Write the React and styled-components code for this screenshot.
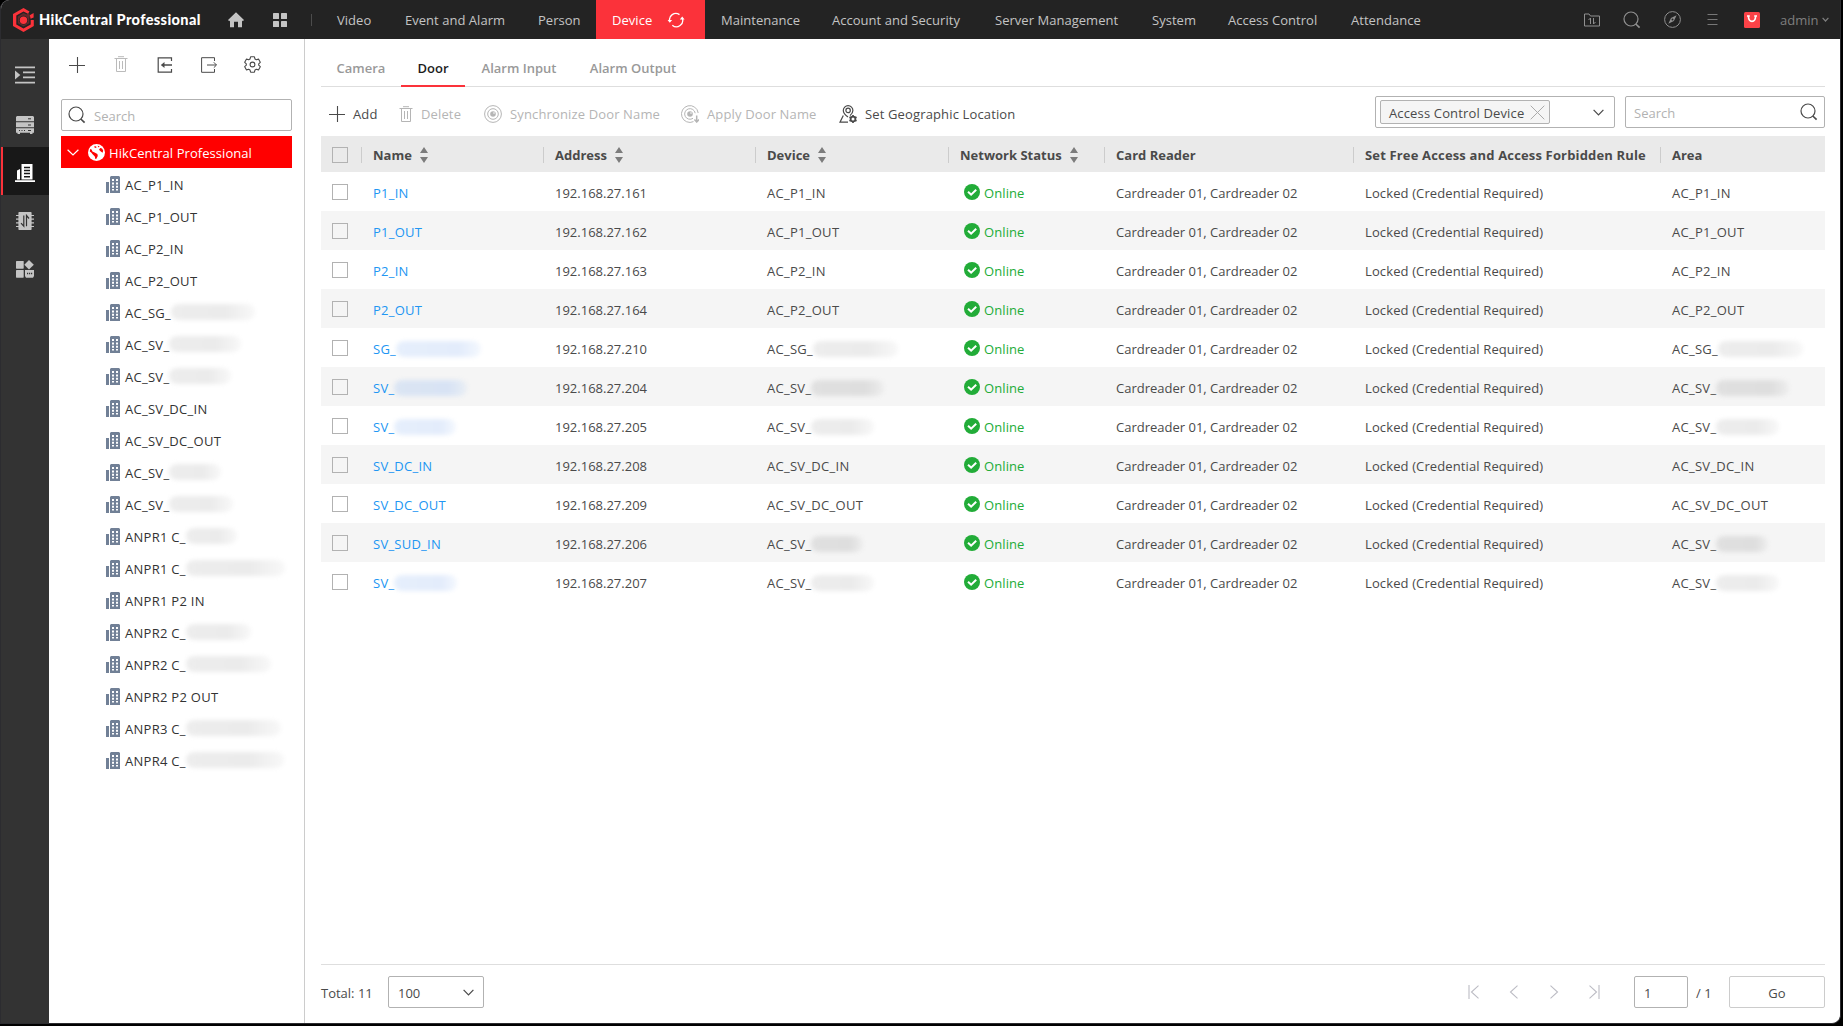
import React, { useState } from 'react';
import styled, { createGlobalStyle } from 'styled-components';

const RED = '#fb323a';

const navItems = [
  { label: 'Video', width: 68 },
  { label: 'Event and Alarm', width: 133 },
  { label: 'Person', width: 74 },
  { label: 'Device', width: 109, active: true },
  { label: 'Maintenance', width: 111 },
  { label: 'Account and Security', width: 163 },
  { label: 'Server Management', width: 157 },
  { label: 'System', width: 76 },
  { label: 'Access Control', width: 123 },
  { label: 'Attendance', width: 103 },
];

const tabs = [
  { label: 'Camera', width: 80 },
  { label: 'Door', width: 64 },
  { label: 'Alarm Input', width: 108 },
  { label: 'Alarm Output', width: 120 },
];

// hidden = width of the masked part that follows the visible prefix
const areas = [
  { name: 'AC_P1_IN' },
  { name: 'AC_P1_OUT' },
  { name: 'AC_P2_IN' },
  { name: 'AC_P2_OUT' },
  { name: 'AC_SG_', hidden: 84 },
  { name: 'AC_SV_', hidden: 72 },
  { name: 'AC_SV_', hidden: 62 },
  { name: 'AC_SV_DC_IN' },
  { name: 'AC_SV_DC_OUT' },
  { name: 'AC_SV_', hidden: 52 },
  { name: 'AC_SV_', hidden: 64 },
  { name: 'ANPR1 C_', hidden: 51 },
  { name: 'ANPR1 C_', hidden: 99 },
  { name: 'ANPR1 P2 IN' },
  { name: 'ANPR2 C_', hidden: 65 },
  { name: 'ANPR2 C_', hidden: 85 },
  { name: 'ANPR2 P2 OUT' },
  { name: 'ANPR3 C_', hidden: 95 },
  { name: 'ANPR4 C_', hidden: 98 },
];

const doors = [
  { name: 'P1_IN', ip: '192.168.27.161', area: 'AC_P1_IN' },
  { name: 'P1_OUT', ip: '192.168.27.162', area: 'AC_P1_OUT' },
  { name: 'P2_IN', ip: '192.168.27.163', area: 'AC_P2_IN' },
  { name: 'P2_OUT', ip: '192.168.27.164', area: 'AC_P2_OUT' },
  { name: 'SG_', ip: '192.168.27.210', area: 'AC_SG_', nameHidden: 85, hidden: 85 },
  { name: 'SV_', ip: '192.168.27.204', area: 'AC_SV_', nameHidden: 73, hidden: 73 },
  { name: 'SV_', ip: '192.168.27.205', area: 'AC_SV_', nameHidden: 62, hidden: 63 },
  { name: 'SV_DC_IN', ip: '192.168.27.208', area: 'AC_SV_DC_IN' },
  { name: 'SV_DC_OUT', ip: '192.168.27.209', area: 'AC_SV_DC_OUT' },
  { name: 'SV_SUD_IN', ip: '192.168.27.206', area: 'AC_SV_', hidden: 52 },
  { name: 'SV_', ip: '192.168.27.207', area: 'AC_SV_', nameHidden: 63, hidden: 63 },
];

const columns = [
  { label: 'Name', sortable: true },
  { label: 'Address', sortable: true },
  { label: 'Device', sortable: true },
  { label: 'Network Status', sortable: true },
  { label: 'Card Reader' },
  { label: 'Set Free Access and Access Forbidden Rule', spacing: 0.16 },
  { label: 'Area' },
];

const Svg = ({ w, h, children, ...rest }) => (
  <svg width={w} height={h} viewBox={`0 0 ${w} ${h}`} fill="none" stroke="currentColor" {...rest}>
    {children}
  </svg>
);

const LogoIcon = () => (
  <Svg w={22} h={24} stroke="none" fill={RED}>
    <path d="M10.5 0 L16.5 3.4 L15 5.8 L10.5 3.4 L3.3 7.5 V16.5 L10.5 20.6 L17.7 16.5 V12 H20.8 V18 L10.5 24 L0 18 V6 Z" />
    <path d="M16.8 7.2 L20.6 5 V9.6 L17.6 10.8 Z" />
    <path d="M10.5 5 L13.5 6.6 L16 5 L17 8 L16.3 10 V15.3 L10.5 18.6 L4.8 15.3 V8.6 Z M10.5 7.8 A4.4 4.4 0 1 0 10.5 16.6 A4.4 4.4 0 1 0 10.5 7.8 Z" fillRule="evenodd" opacity="0.3" />
    <circle cx="10.5" cy="12.2" r="3.7" />
  </Svg>
);

const HomeIcon = () => (
  <Svg w={16} h={16} stroke="none" fill="currentColor">
    <path d="M8 0.3 L16 8 L14.8 9.2 L14 8.5 V15.2 H10 V9.8 H6 V15.2 H2 V8.5 L1.2 9.2 L0 8 Z" />
  </Svg>
);

const GridIcon = () => (
  <Svg w={14} h={14} stroke="none" fill="currentColor">
    <rect width="6" height="6" rx="0.6" />
    <rect x="8" width="6" height="6" rx="0.6" />
    <rect y="8" width="6" height="6" rx="0.6" />
    <rect x="8" y="8" width="6" height="6" rx="0.6" />
  </Svg>
);

const RefreshIcon = () => (
  <Svg w={18} h={16} strokeWidth="1.3">
    <path d="M2.8 9.5 A6.3 6.3 0 0 1 12.5 2.6" />
    <path d="M15.2 6 A6.3 6.3 0 0 1 5.3 13.2" />
    <path d="M0.6 8 L2.8 10.8 L5.2 8 Z" fill="currentColor" stroke="none" />
    <path d="M12.8 7.4 L15.2 4.4 L17.6 7.4 Z" fill="currentColor" stroke="none" />
  </Svg>
);

const SearchIcon = () => (
  <Svg w={18} h={18} strokeWidth="1.2">
    <circle cx="8" cy="8" r="7" />
    <path d="M12.8 13 L16.6 16.6" strokeWidth="1.7" />
  </Svg>
);

const FolderIcon = () => (
  <Svg w={16} h={14}>
    <path d="M0.5 13 V1 H5 L6.5 3 H15.5 V13 Z" />
    <path d="M6.5 11 V5 L4.5 7 M9.5 5 V11 L11.5 9" />
  </Svg>
);

const CompassIcon = () => (
  <Svg w={17} h={17}>
    <circle cx="8.5" cy="8.5" r="7.9" />
    <path d="M12.6 4.2 L9.9 9.9 L7 7.1 Z M4.3 12.8 L7 7.1 L9.9 9.9 Z" fill="currentColor" stroke="none" />
    <circle cx="8.5" cy="8.5" r="1" fill="#232323" stroke="none" />
  </Svg>
);

const MenuIcon = () => (
  <Svg w={11} h={11}>
    <path d="M0.5 0.5 H10.5 M0.5 5.5 H10.5 M0.5 10.5 H10.5" strokeWidth="1.2" />
  </Svg>
);

const BagIcon = () => (
  <Svg w={16} h={16}>
    <rect width="16" height="16" rx="1.5" fill="#fb4247" stroke="none" />
    <path d="M4.4 4.3 C4.6 11 11.4 11 11.6 4.3" stroke="#fff" strokeWidth="1.6" />
    <path d="M3 4 H5.8 M10.2 4 H13" stroke="#fff" strokeWidth="1.6" />
  </Svg>
);

const Chevron = ({ w = 11, h = 7 }) => (
  <Svg w={w} h={h} strokeWidth="1.2">
    <path d={`M0.6 0.8 L${w / 2} ${h - 1} L${w - 0.6} 0.8`} />
  </Svg>
);

const IndentIcon = () => (
  <Svg w={20} h={18} strokeWidth="1.7">
    <path d="M0 1.3 H20 M8 6.3 H20 M8 11.3 H20 M0 16.7 H20" />
    <path d="M0 4.5 L5.3 9 L0 13.5 Z" fill="currentColor" stroke="none" />
  </Svg>
);

const ServerIcon = () => (
  <Svg w={18} h={18} stroke="none" fill="currentColor">
    <path d="M1 0 H17 L18 1 V5.3 H0 V1 Z M0 6.3 H18 V11.3 H0 Z M0 12.3 H18 V16.8 H16.5 V18 H14 V16.8 H4 V18 H1.5 V16.8 H0 Z" />
    <path d="M12 2.8 H15 M12 9 H15 M12 14.5 H15 M3 14.5 H4 M5.5 14.5 H6.5 M8 14.5 H9" stroke="#333" />
  </Svg>
);

const BuildingIcon = () => (
  <Svg w={20} h={18} stroke="none" fill="currentColor">
    <path d="M2 6.5 L5 5 V15.6 H2 Z M6.5 0 H17.5 V15.6 H6.5 Z M0 16.2 H20 V18 H0 Z" />
    <path d="M9 3.5 H15 M9 6.5 H15 M9 9.5 H15 M9 12.7 H15" stroke="#181818" strokeWidth="1.5" />
  </Svg>
);

const ChipIcon = () => (
  <Svg w={18} h={18}>
    <path d="M0 3.5 H18 M0 7.2 H18 M0 10.9 H18 M0 14.5 H18" strokeWidth="1.2" />
    <rect x="2.4" width="13.2" height="18" rx="0.8" fill="currentColor" stroke="none" />
    <path d="M7.8 3.5 V14.2 L5 11.2 M10.5 14.2 V3.5 L13 6.5" stroke="#333" strokeWidth="1.2" />
  </Svg>
);

const WidgetsIcon = () => (
  <Svg w={18} h={18} stroke="none" fill="currentColor">
    <rect y="1" width="7.7" height="7.7" rx="0.6" />
    <rect y="10" width="7.7" height="7.7" rx="0.6" />
    <path d="M13 0 L17.8 4.7 L13 9.4 L8.3 4.7 Z" />
    <path d="M9 10 H18 V16 L17 17.7 H10 L9 16 Z" />
    <path d="M11 13.5 H12.2 M13 13.5 H14.2 M15 13.5 H16.2" stroke="#333" strokeWidth="1.6" />
  </Svg>
);

const PlusIcon = () => (
  <Svg w={16} h={16}>
    <path d="M0 8.5 H16 M8.5 0 V16" strokeWidth="1.1" />
  </Svg>
);

const TrashIcon = () => (
  <Svg w={14} h={17}>
    <path d="M4 0.7 H10 M0.5 2.5 H13.5 M2.5 3 V15.5 H11.5 V3 M5.5 5 V13 M8.5 5 V13" />
  </Svg>
);

const ImportIcon = () => (
  <Svg w={16} h={16} strokeWidth="1.2">
    <path d="M14.5 4 V0.8 H1.2 V15.2 H14.5 V12" />
    <path d="M5 8 H15" strokeWidth="1.4" />
    <path d="M3.8 8 L7.5 5 V11 Z" fill="currentColor" stroke="none" />
  </Svg>
);

const ExportIcon = () => (
  <Svg w={16} h={16}>
    <path d="M13.5 4 V0.7 H0.6 V15.3 H13.5 V12" />
    <path d="M6 8 H15.3 M12.8 5.3 L15.5 8 L12.8 10.7" />
  </Svg>
);

const GearIcon = () => (
  <Svg w={17} h={17} strokeWidth="1.1" strokeLinejoin="round">
    <path d="M6.6 0.8 H10.4 L11 3 L12.3 3.7 L14.5 3.1 L16.3 6.3 L14.7 7.8 V9.2 L16.3 10.7 L14.5 13.9 L12.3 13.3 L11 14 L10.4 16.2 H6.6 L6 14 L4.7 13.3 L2.5 13.9 L0.7 10.7 L2.3 9.2 V7.8 L0.7 6.3 L2.5 3.1 L4.7 3.7 L6 3 Z" />
    <circle cx="8.5" cy="8.5" r="2.4" />
  </Svg>
);

const GlobeIcon = () => (
  <Svg w={17} h={17} stroke="none">
    <circle cx="8.5" cy="8.5" r="8.5" fill="#fff" />
    <path d="M2.2 5 L3.6 5.6 L4.4 7.6 L6.6 8.4 L9.4 10 L9.8 12 L8.2 15 L7.4 15 L6.8 12.4 L4.6 10.2 L3.2 8.6 L1.8 7.6 Z M6 2.6 L8 2.2 L8.6 3.4 L7 4 Z M9.6 1.8 L11.6 2.2 L10.6 3.6 Z M12.2 4 L14 4.4 L15.2 6.6 L14.6 8.8 L12.8 7.6 L11 5.8 Z" fill="#f00" />
  </Svg>
);

const AreaIcon = () => (
  <Svg w={14} h={17} stroke="none" fill="#718096">
    <path d="M0 6 H3 V17 H0 Z M5 0 H13 L14 1 V17 H4 V1 Z" />
    <path d="M6 3 H8 V5 H6 Z M10 3 H12 V5 H10 Z M6 6.4 H8 V8.4 H6 Z M10 6.4 H12 V8.4 H10 Z M6 9.8 H8 V11.8 H6 Z M10 9.8 H12 V11.8 H10 Z M6 13 H8 V14.6 H6 Z M10 13 H12 V14.6 H10 Z" fill="#fff" />
  </Svg>
);

const SyncDoorIcon = () => (
  <Svg w={18} h={18}>
    <circle cx="9" cy="9" r="8.4" />
    <circle cx="9" cy="9" r="5.3" />
    <circle cx="9" cy="9" r="2.8" fill="currentColor" stroke="none" />
    <circle cx="10" cy="8" r="0.8" fill="#fff" stroke="none" />
  </Svg>
);

const ApplyDoorIcon = () => (
  <Svg w={18} h={18}>
    <path d="M12.5 16.6 A8.4 8.4 0 1 1 17.2 8" />
    <path d="M12 13.3 A5.3 5.3 0 1 1 14.2 8.2" />
    <circle cx="9" cy="9" r="2.8" fill="currentColor" stroke="none" />
    <circle cx="10" cy="8" r="0.8" fill="#fff" stroke="none" />
    <path d="M15.7 10.5 V17 M13.4 14.6 L15.7 17 L18 14.6" strokeWidth="1.5" />
  </Svg>
);

const GeoIcon = () => (
  <Svg w={18} h={18} strokeWidth="1.2">
    <path d="M9 12 C5.5 9.5 4.3 7.6 4.3 5.5 A4.8 4.8 0 0 1 13.9 5.5 C13.9 7.4 12.8 9 11 10.6" />
    <circle cx="9.1" cy="5.4" r="2.2" />
    <path d="M4.3 10.6 L1 17.2 H9" />
    <circle cx="14" cy="14" r="2.4" strokeWidth="1.8" />
    <path d="M14 10 V11.4 M14 16.6 V18 M10.5 12 L11.7 12.7 M16.3 15.3 L17.5 16 M10.5 16 L11.7 15.3 M16.3 12.7 L17.5 12" strokeWidth="1.7" />
  </Svg>
);

const CloseIcon = () => (
  <Svg w={15} h={15}>
    <path d="M0.7 0.7 L14.3 14.3 M14.3 0.7 L0.7 14.3" />
  </Svg>
);

const OnlineIcon = () => (
  <Svg w={16} h={16}>
    <circle cx="8" cy="8" r="8" fill="#22ac38" stroke="none" />
    <path d="M4 7.8 L7.1 10.6 L12.2 5.7" stroke="#fff" strokeWidth="2" />
  </Svg>
);

const SortIcon = () => (
  <Svg w={8} h={16} stroke="none" fill="#7c7c7c">
    <path d="M4 0 L8 6 H0 Z M0 10 H8 L4 16 Z" />
  </Svg>
);

const PageIcon = ({ flip, bar }) => (
  <Svg w={12} h={14} transform={flip ? 'scale(-1 1)' : undefined} strokeWidth="1.1">
    <path d={bar ? 'M10.5 0.7 L3.5 7 L10.5 13.3' : 'M9.5 0.7 L2.5 7 L9.5 13.3'} />
    {bar && <path d="M1 0 V14" />}
  </Svg>
);

const App = () => {
  const [activeTab, setActiveTab] = useState('Door');

  return (
    <>
      <GlobalStyle />
      <Window>
        <TopBar>
          <Brand>
            <LogoIcon />
            <BrandName>HikCentral Professional</BrandName>
          </Brand>
          <Shortcuts>
            <HomeIcon />
            <GridIcon />
            <Divider />
          </Shortcuts>
          <Nav>
            {navItems.map((item) => (
              <NavItem key={item.label} $width={item.width} $active={item.active}>
                {item.label}
                {item.active && <RefreshIcon />}
              </NavItem>
            ))}
          </Nav>
          <TopTools>
            <TopTool><FolderIcon /></TopTool>
            <TopTool><SearchIcon /></TopTool>
            <TopTool><CompassIcon /></TopTool>
            <TopTool $dim><MenuIcon /></TopTool>
            <TopTool><BagIcon /></TopTool>
            <User>admin <Chevron w={7} h={5} /></User>
          </TopTools>
        </TopBar>

        <Body>
          <Rail>
            <RailItem><IndentIcon /></RailItem>
            <RailItem $low><ServerIcon /></RailItem>
            <RailItem $low $active><BuildingIcon /></RailItem>
            <RailItem $low><ChipIcon /></RailItem>
            <RailItem $low><WidgetsIcon /></RailItem>
          </Rail>

          <Sidebar>
            <TreeTools>
              <TreeTool><PlusIcon /></TreeTool>
              <TreeTool $disabled><TrashIcon /></TreeTool>
              <TreeTool><ImportIcon /></TreeTool>
              <TreeTool><ExportIcon /></TreeTool>
              <TreeTool><GearIcon /></TreeTool>
            </TreeTools>
            <TreeSearch>
              <SearchIcon />
              <Placeholder>Search</Placeholder>
            </TreeSearch>
            <TreeRoot>
              <Chevron w={12} h={7} />
              <GlobeIcon />
              <span>HikCentral Professional</span>
            </TreeRoot>
            {areas.map((area, index) => (
              <TreeItem key={index}>
                <AreaIcon />
                <span>{area.name}</span>
                {area.hidden && <Smudge $width={area.hidden} />}
              </TreeItem>
            ))}
          </Sidebar>

          <Main>
            <Tabs>
              {tabs.map((tab) => (
                <Tab
                  key={tab.label}
                  $width={tab.width}
                  $active={tab.label === activeTab}
                  onClick={() => setActiveTab(tab.label)}
                >
                  {tab.label}
                </Tab>
              ))}
            </Tabs>

            <Toolbar>
              <Action $width={62}><PlusIcon />Add</Action>
              <Action $width={77} $disabled><TrashIcon />Delete</Action>
              <Action $width={189} $disabled><SyncDoorIcon />Synchronize Door Name</Action>
              <Action $width={150} $disabled><ApplyDoorIcon />Apply Door Name</Action>
              <Action $width={180}><GeoIcon />Set Geographic Location</Action>
              <Filters>
                <TypeSelect>
                  <Tag>
                    Access Control Device
                    <CloseIcon />
                  </Tag>
                  <Chevron />
                </TypeSelect>
                <TableSearch>
                  <Placeholder>Search</Placeholder>
                  <SearchIcon />
                </TableSearch>
              </Filters>
            </Toolbar>

            <HeaderRow>
              <CheckCell><Checkbox /></CheckCell>
              {columns.map((col) => (
                <HeaderCell key={col.label} $spacing={col.spacing}>
                  {col.label}
                  {col.sortable && <SortIcon />}
                </HeaderCell>
              ))}
            </HeaderRow>
            {doors.map((door, index) => (
              <Row key={door.ip} $striped={index % 2 === 1}>
                <CheckCell><Checkbox /></CheckCell>
                <Cell $link $spacing={0.25}>
                  {door.name}
                  {door.nameHidden && <Smudge $width={door.nameHidden} $blue $dark={index % 2 === 1} />}
                </Cell>
                <Cell>{door.ip}</Cell>
                <Cell $spacing={0.28}>
                  {door.area}
                  {door.hidden && <Smudge $width={door.hidden} $dark={index % 2 === 1} />}
                </Cell>
                <StatusCell $spacing={0.1}><OnlineIcon />Online</StatusCell>
                <Cell>Cardreader 01, Cardreader 02</Cell>
                <Cell $spacing={0.12}>Locked (Credential Required)</Cell>
                <Cell $spacing={0.28}>
                  {door.area}
                  {door.hidden && <Smudge $width={door.hidden} $dark={index % 2 === 1} />}
                </Cell>
              </Row>
            ))}

            <Footer>
              <Total>Total: {doors.length}</Total>
              <PageSize>100 <Chevron /></PageSize>
              <Pager>
                <PageIcon bar />
                <PageIcon />
                <PageIcon flip />
                <PageIcon flip bar />
              </Pager>
              <PageInput>1</PageInput>
              <PageCount>/ 1</PageCount>
              <GoButton>Go</GoButton>
            </Footer>
          </Main>
        </Body>
      </Window>
    </>
  );
};

export default App;

const GlobalStyle = createGlobalStyle`
  * {
    box-sizing: border-box;
  }

  body {
    margin: 0;
    background: #000;
    font-family: 'Open Sans', 'Noto Sans', sans-serif;
    font-size: 13px;
    color: #4a4a4a;
    overflow: hidden;
  }

  svg {
    display: block;
    flex: none;
  }
`;

const Window = styled.div`
  display: flex;
  flex-direction: column;
  width: 1841px;
  height: 1024px;
  border: solid #2c2c30;
  border-width: 0 1px 1px 1px;
  border-radius: 9px 0 9px 0;
  background: #fff;
  overflow: hidden;
  white-space: nowrap;
`;

const TopBar = styled.header`
  display: flex;
  height: 39px;
  flex: none;
  background: #232323;
`;

const Brand = styled.div`
  display: flex;
  align-items: center;
  width: 227px;
  padding-left: 12px;
  gap: 4px;
`;

const BrandName = styled.span`
  font-family: Lato, sans-serif;
  font-weight: 900;
  font-size: 14.5px;
  line-height: 18px;
  letter-spacing: 0.39px;
  color: #fff;
`;

const Shortcuts = styled.div`
  display: flex;
  align-items: center;
  width: 92px;
  gap: 29px;
  color: #c4c4c4;
`;

const Divider = styled.span`
  width: 1px;
  height: 12px;
  margin-left: -5px;
  background: #4c4c4c;
`;

const Nav = styled.nav`
  display: flex;
  padding-left: 1px;
`;

const NavItem = styled.a`
  display: flex;
  align-items: center;
  width: ${({ $width }) => $width}px;
  padding: 0 0 0 16px;
  gap: 15px;
  letter-spacing: 0.03px;
  color: ${({ $active }) => ($active ? '#fff' : '#c4c4c4')};
  background: ${({ $active }) => ($active ? RED : 'transparent')};
`;

const TopTools = styled.div`
  display: flex;
  align-items: center;
  margin-left: auto;
`;

const TopTool = styled.span`
  display: flex;
  justify-content: center;
  width: 40px;
  color: ${({ $dim }) => ($dim ? '#777' : '#909090')};
`;

const User = styled.span`
  display: flex;
  align-items: center;
  width: 68px;
  padding-left: 8px;
  gap: 4px;
  color: #7f7f7f;
`;

const Body = styled.div`
  display: flex;
  flex: 1;
  min-height: 0;
`;

const Rail = styled.aside`
  width: 48px;
  padding-top: 12px;
  background: #333;
`;

const RailItem = styled.div`
  display: flex;
  align-items: center;
  justify-content: center;
  height: 48px;
  padding-top: ${({ $low }) => ($low ? 4 : 0)}px;
  color: ${({ $active }) => ($active ? '#fff' : '#c4c4c4')};
  background: ${({ $active }) => ($active ? '#181818' : 'transparent')};
  box-shadow: ${({ $active }) => ($active ? `inset 2px 0 0 ${RED}` : 'none')};
`;

const Sidebar = styled.aside`
  width: 256px;
  padding: 0 12px;
  border-right: 1px solid #ccc;
`;

const TreeTools = styled.div`
  display: flex;
  height: 60px;
  margin-left: -6px;
  padding-bottom: 9px;
`;

const TreeTool = styled.span`
  display: flex;
  align-items: center;
  justify-content: center;
  width: 44px;
  color: ${({ $disabled }) => ($disabled ? '#bbb' : '#4a4a4a')};

  &:last-child {
    width: 42px;
  }
`;

const TreeSearch = styled.div`
  display: flex;
  align-items: center;
  height: 32px;
  padding-left: 6px;
  gap: 8px;
  border: 1px solid #b2b2b2;
  border-radius: 2px;
`;

const Placeholder = styled.span`
  padding-top: 2px;
  color: #b2b2b2;
`;

const TreeRoot = styled.div`
  display: flex;
  align-items: center;
  height: 32px;
  margin-top: 5px;
  padding-left: 6px;
  letter-spacing: 0.06px;
  color: #fff;
  background: #f00;

  svg + svg {
    margin: 0 4px 0 9px;
  }

  span {
    padding-top: 2px;
  }
`;

const TreeItem = styled.div`
  display: flex;
  align-items: center;
  height: 32px;
  padding-left: 45px;
  letter-spacing: 0.28px;
  color: #333;

  > svg {
    margin-right: 5px;
  }

  span {
    padding-top: 2px;
  }
`;

const Smudge = styled.i`
  flex: none;
  width: ${({ $width }) => $width}px;
  height: 16px;
  border-radius: 8px;
  filter: blur(2px);
  background: ${({ $blue, $dark }) => {
    if ($blue) {
      return $dark
        ? 'linear-gradient(90deg, #dbe5f3, #d8e3f4 75%, #e9eef4)'
        : 'linear-gradient(90deg, #e6effc, #e3ecfb 75%, #f4f8fe)';
    }
    return $dark
      ? 'linear-gradient(90deg, #e0e0e0, #dedede 75%, #ededed)'
      : 'linear-gradient(90deg, #ededed, #ebebeb 65%, #f8f8f8)';
  }};
`;

const Main = styled.main`
  display: flex;
  flex-direction: column;
  flex: 1;
  padding: 0 15px 0 16px;
`;

const Tabs = styled.div`
  display: flex;
  height: 48px;
  flex: none;
  border-bottom: 1px solid #dedede;
`;

const Tab = styled.a`
  width: ${({ $width }) => $width}px;
  height: 48px;
  padding-top: 11px;
  line-height: 36px;
  text-align: center;
  font-weight: 600;
  cursor: pointer;
  color: ${({ $active }) => ($active ? '#1c1c1c' : '#999')};
  border-bottom: 2px solid ${({ $active }) => ($active ? RED : 'transparent')};
`;

const Toolbar = styled.div`
  display: flex;
  height: 49px;
  flex: none;
  padding-left: 8px;
`;

const Action = styled.span`
  display: flex;
  align-items: center;
  width: ${({ $width }) => $width}px;
  margin-right: 8px;
  padding-top: 5px;
  gap: 8px;
  line-height: 18px;
  letter-spacing: 0.14px;
  color: ${({ $disabled }) => ($disabled ? '#b5b5b5' : '#4a4a4a')};
`;

const Filters = styled.div`
  display: flex;
  margin: 9px 0 0 auto;
  gap: 10px;
`;

const TypeSelect = styled.div`
  display: flex;
  align-items: center;
  justify-content: space-between;
  width: 240px;
  height: 32px;
  padding: 0 10px 0 4px;
  border: 1px solid #b2b2b2;
  border-radius: 2px;
`;

const Tag = styled.span`
  display: flex;
  align-items: center;
  justify-content: space-between;
  width: 170px;
  height: 24px;
  padding: 1px 4px 0 8px;
  letter-spacing: 0.15px;
  border: 1px solid #b2b2b2;
  border-radius: 2px;
  background: #f5f5f5;

  svg {
    color: #aaa;
  }
`;

const TableSearch = styled.div`
  display: flex;
  align-items: center;
  justify-content: space-between;
  width: 200px;
  height: 32px;
  padding: 0 6px 0 8px;
  border: 1px solid #b2b2b2;
  border-radius: 2px;
`;

const Row = styled.div`
  display: grid;
  grid-template-columns: 40px 182px 212px 193px 156px 249px 307px 1fr;
  align-items: center;
  height: 39px;
  flex: none;
  background: ${({ $striped }) => ($striped ? '#f5f5f5' : '#fff')};
`;

const HeaderRow = styled(Row)`
  height: 36px;
  padding-top: 2px;
  background: #eaeaea;
`;

const CheckCell = styled.div`
  padding-left: 11px;
`;

const Checkbox = styled.div`
  width: 16px;
  height: 16px;
  border: 1px solid #b2b2b2;
`;

const HeaderCell = styled.div`
  display: flex;
  align-items: center;
  height: 16px;
  padding-left: 11px;
  gap: 8px;
  border-left: 1px solid #ccc;
  font-weight: 700;
  letter-spacing: ${({ $spacing = 0 }) => $spacing}px;
`;

const Cell = styled.div`
  display: flex;
  align-items: center;
  padding: 2px 0 0 12px;
  letter-spacing: ${({ $spacing = 0 }) => $spacing}px;
  color: ${({ $link }) => ($link ? '#2196f3' : '#4a4a4a')};
`;

const StatusCell = styled(Cell)`
  padding-left: 16px;
  gap: 4px;
  color: #22ac38;

  svg {
    margin-top: -1px;
  }
`;

const Footer = styled.footer`
  display: flex;
  align-items: center;
  height: 59px;
  margin-top: auto;
  padding-bottom: 4px;
  border-top: 1px solid #dedede;
`;

const Total = styled.span`
  width: 67px;
  padding-top: 2px;
`;

const PageSize = styled.div`
  display: flex;
  align-items: center;
  justify-content: space-between;
  width: 96px;
  height: 32px;
  padding: 1px 9px 0 9px;
  border: 1px solid #b2b2b2;
  border-radius: 2px;
`;

const Pager = styled.div`
  display: flex;
  margin-left: auto;
  gap: 28px;
  color: #bcbcc4;
`;

const PageInput = styled.div`
  width: 54px;
  height: 32px;
  margin-left: 34px;
  padding-left: 9px;
  line-height: 32px;
  border: 1px solid #b2b2b2;
  border-radius: 2px;
`;

const PageCount = styled.span`
  width: 41px;
  padding: 2px 0 0 8px;
`;

const GoButton = styled.div`
  width: 96px;
  height: 32px;
  line-height: 32px;
  text-align: center;
  border: 1px solid #ccc;
  border-radius: 2px;
`;
